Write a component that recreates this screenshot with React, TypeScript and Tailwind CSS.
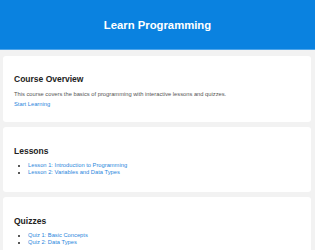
export default function App() {
  const lessons = ['Lesson 1: Introduction to Programming', 'Lesson 2: Variables and Data Types'];
  const quizzes = ['Quiz 1: Basic Concepts', 'Quiz 2: Data Types'];

  return (
    <div className="min-h-[250px] bg-[#f2f2f2] font-['Liberation_Sans',Arial,sans-serif]">
      {/* Header */}
      <header className="h-[50px] bg-[#0a82e0] border-b border-[#4ea5ea] flex items-center justify-center">
        <h1 className="mt-[1px] text-[11.3px] leading-[13px] font-bold text-white">Learn Programming</h1>
      </header>

      <main className="pt-[6px] pl-[3px] pr-[4px] flex flex-col gap-[5px]">
        {/* Course overview */}
        <section className="bg-white rounded-[3px] px-[11px] pt-[18px] pb-[14px]">
          <h2 className="text-[8.5px] leading-[10px] font-bold text-[#222]">Course Overview</h2>
          <p className="mt-[7px] text-[5.75px] leading-[7px] text-[#555]">
            This course covers the basics of programming with interactive lessons and quizzes.
          </p>
          <a href="#" className="block mt-[3px] text-[5.75px] leading-[7px] text-[#2a86dc]">
            Start Learning
          </a>
        </section>

        {/* Lessons */}
        <section className="bg-white rounded-[3px] px-[11px] pt-[19px] pb-[16px]">
          <h2 className="text-[8.5px] leading-[10px] font-bold text-[#222]">Lessons</h2>
          <ul className="mt-[6px] pl-[14px] list-disc text-[5.75px] leading-[7px] text-[#222]">
            {lessons.map((l) => (
              <li key={l}>
                <a href="#" className="text-[#2a86dc]">{l}</a>
              </li>
            ))}
          </ul>
        </section>

        {/* Quizzes */}
        <section className="bg-white rounded-[3px] px-[11px] pt-[19px] pb-[16px]">
          <h2 className="text-[8.5px] leading-[10px] font-bold text-[#222]">Quizzes</h2>
          <ul className="mt-[6px] pl-[14px] list-disc text-[5.75px] leading-[7px] text-[#222]">
            {quizzes.map((q) => (
              <li key={q}>
                <a href="#" className="text-[#2a86dc]">{q}</a>
              </li>
            ))}
          </ul>
        </section>
      </main>
    </div>
  );
}
